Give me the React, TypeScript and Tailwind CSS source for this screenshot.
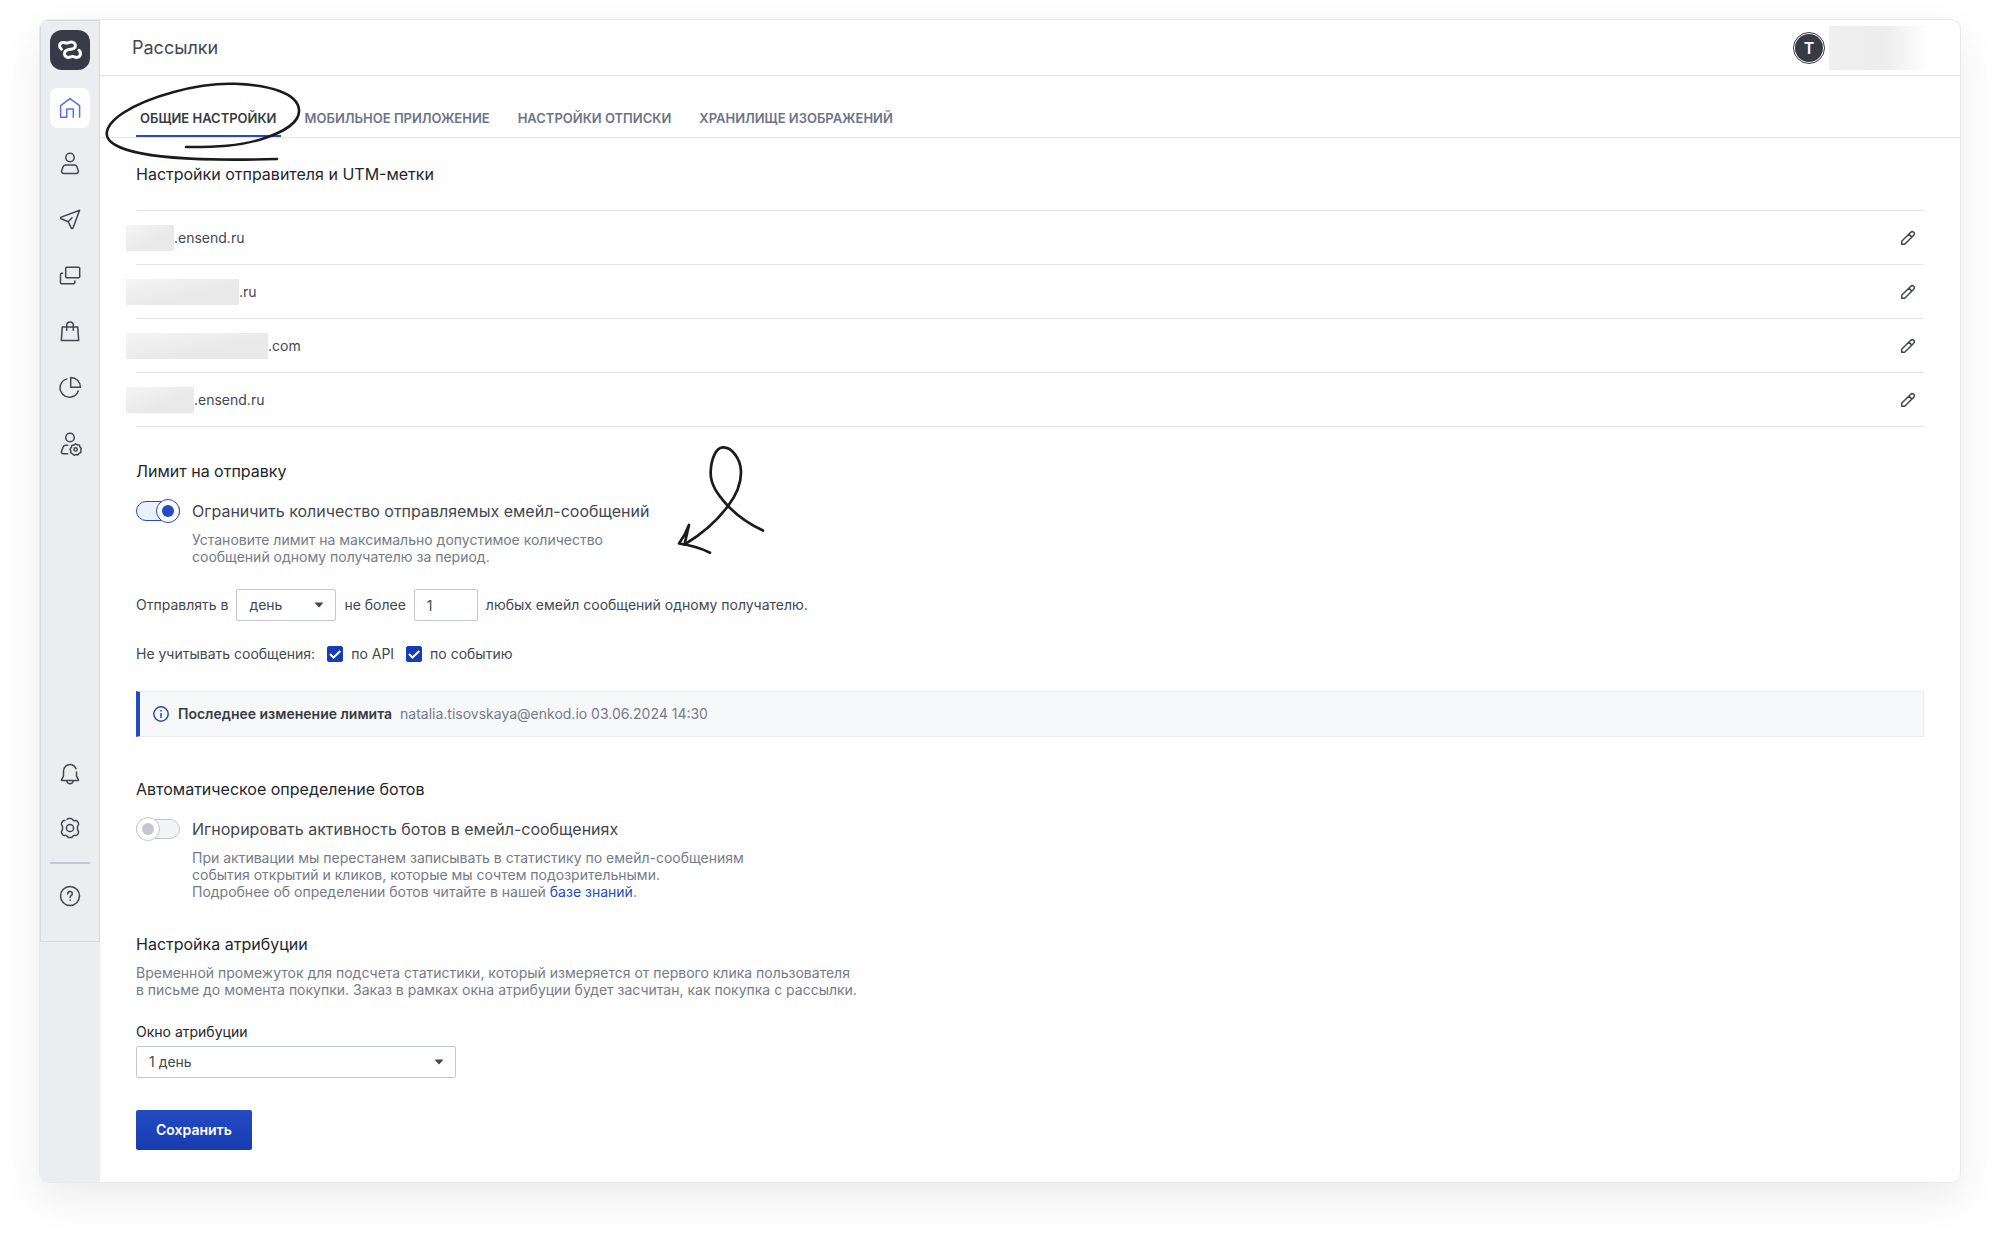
import type React from "react"

const INK = "#43474f"

function NavIcon({ children, stroke = INK }: { children: React.ReactNode; stroke?: string }) {
  return (
    <svg
      width="24"
      height="24"
      viewBox="0 0 24 24"
      fill="none"
      stroke={stroke}
      strokeWidth="1.5"
      strokeLinecap="round"
      strokeLinejoin="round"
      aria-hidden="true"
    >
      {children}
    </svg>
  )
}

const mainNav = [
  {
    label: "Главная",
    active: true,
    icon: (
      <NavIcon stroke="#4f74e6">
        <path d="M8.700 21.300H2.600V9.600L12 2.600l9.600 7v11.700M8.700 21.300v-8.400h6.600v8.400" />
      </NavIcon>
    ),
  },
  {
    label: "Контакты",
    icon: (
      <NavIcon>
        <circle cx="12" cy="5.500" r="4.200" />
        <path d="M7.400 13h9.200c1 0 1.800.6 2.200 1.500l1.500 4c.5 1.500-.4 2.900-2 2.900H5.700c-1.600 0-2.500-1.400-2-2.900l1.500-4c.4-.9 1.200-1.500 2.200-1.500z" />
      </NavIcon>
    ),
  },
  {
    label: "Рассылки",
    icon: (
      <NavIcon>
        <path d="M21.600 2.300 15 20c-.3.800-1.300.8-1.700.1l-3.100-6.400-7-2.900c-.8-.4-.8-1.400.1-1.700l18.300-6.800zM10.200 13.700l3.800-3.900" />
      </NavIcon>
    ),
  },
  {
    label: "Шаблоны",
    icon: (
      <NavIcon>
        <rect x="7.700" y="3.300" width="14" height="10.500" rx="1" />
        <path d="M4.600 9.300H3.500c-.6 0-1 .4-1 1V18.700c0 .6.4 1 1 1h12.300c.6 0 1-.4 1-1v-1.800" />
      </NavIcon>
    ),
  },
  {
    label: "Товары",
    icon: (
      <NavIcon>
        <path d="M4.300 6.900h15.400l1 13.600H3.300l1-13.600zM8.700 10.200V5.400a3.300 3.300 0 0 1 6.600 0v4.800" />
      </NavIcon>
    ),
  },
  {
    label: "Аналитика",
    icon: (
      <NavIcon>
        <path d="M9 2.900a9.300 9.300 0 1 0 11.200 12M12.700 1.500v9.700h9.700a9.700 9.700 0 0 0-9.700-9.700z" />
      </NavIcon>
    ),
  },
  {
    label: "Пользователи",
    icon: (
      <NavIcon>
        <circle cx="12" cy="5.500" r="4.300" />
        <path d="M9.600 21.800H5.300c-1.500 0-2.200-1.200-1.700-2.600l1.500-4c.5-1.200 1.300-1.900 2.600-1.900h2" />
        <path d="m17.600 11.800 1.700 1.100 2 .1.700 1.900 1.400 1.500-.6 1.900.2 2-1.800 1-1.200 1.600-2-.3-2 .6-1.400-1.400-1.800-.9v-2l-.8-1.900 1.300-1.500.5-2 2-.4z" />
        <circle cx="17.600" cy="17.400" r="1.700" />
      </NavIcon>
    ),
  },
]

const tabs = ["Общие настройки", "Мобильное приложение", "Настройки отписки", "Хранилище изображений"]

const domains = [
  { suffix: ".ensend.ru", mask: "w-12" },
  { suffix: ".ru", mask: "w-[113px]" },
  { suffix: ".com", mask: "w-[142px]" },
  { suffix: ".ensend.ru", mask: "w-[68px]" },
]

function Logo() {
  return (
    <svg
      width="40"
      height="40"
      viewBox="0 0 40 40"
      fill="none"
      stroke="#fff"
      strokeWidth="3"
      strokeLinecap="round"
      aria-hidden="true"
    >
      <path d="M11.500 19.200c-2.500-1.700-2.600-4.900-.3-6.300 1.900-1.200 3.500-.2 5 .1 1.800.3 3-.9 5-.9 2.900 0 4.800 2 4.200 4.300-.5 2-2.500 2.600-4.700 2.900-2.500.3-5.400.8-6.100 3.300-.7 2.700 1.300 5 4 4.800 1.600-.1 2.700-1.200 4.300-.9 1.500.3 2.600 1.200 4.500.8 3.400-.7 4.200-4.900 1.500-7" />
    </svg>
  )
}

function Sidebar() {
  return (
    <aside className="w-[60px] shrink-0 bg-[#ecedf1]">
      <nav className="flex flex-col items-center border border-[#d5d9e0] pt-[9px] pb-[25px]">
        <a href="#" aria-label="Enkod" className="mb-[18px] rounded-xl bg-[#383b47]">
          <Logo />
        </a>
        <div className="flex flex-col gap-4">
          {mainNav.map((item) => (
            <a
              key={item.label}
              href="#"
              aria-label={item.label}
              className={`flex size-10 items-center justify-center rounded-lg ${item.active ? "bg-white" : ""}`}
            >
              {item.icon}
            </a>
          ))}
        </div>
        <a href="#" aria-label="Уведомления" className="mt-[290px] flex size-10 items-center justify-center">
          <NavIcon>
            <path d="M18 6.800C16.900 4 14.700 2.500 12 2.500c-3.800 0-6.500 2.900-6.500 6.700v4.600c0 1.200-2 2.700-2 4.700h17c0-2-2-3.500-2-4.700V10M8.700 18.800c.4 1.700 1.600 2.900 3.300 2.900s2.900-1.200 3.300-2.900" />
          </NavIcon>
        </a>
        <a href="#" aria-label="Настройки" className="mt-[14px] flex size-10 items-center justify-center">
          <NavIcon>
            <path d="M9 3.300c.6-.6 1.300-.9 2-.9h2c.9 0 1.300.5 1.700 1.200.5.900 1.400 1.300 2.500 1 .9-.2 1.700-.1 2.200.7l1 1.700c.5.900.3 1.500-.3 2.200-.9 1-.9 4.600 0 5.600.6.700.8 1.300.3 2.200l-1 1.700c-.5.800-1.300.9-2.200.7-1.100-.3-2 .1-2.500 1-.4.700-.8 1.200-1.700 1.200h-2c-.9 0-1.300-.5-1.700-1.200-.5-.9-1.400-1.300-2.500-1-.9.2-1.700.1-2.200-.7l-1-1.700c-.5-.9-.3-1.500.3-2.200.9-1 .9-4.600 0-5.600-.6-.7-.8-1.300-.3-2.200l1-1.700c.5-.8 1.300-.9 2.200-.7" />
            <circle cx="12" cy="12" r="3.600" />
          </NavIcon>
        </a>
        <hr className="mt-[14px] w-10 border-t-2 border-[#c3c8d3]" />
        <a href="#" aria-label="Помощь" className="mt-3 flex size-10 items-center justify-center">
          <NavIcon>
            <circle cx="12" cy="12" r="9.500" />
            <path d="M9.700 9.900c0-1.400 1-2.300 2.300-2.300s2.300.9 2.300 2.100c0 1.700-2.200 1.800-2.200 3.700M12.100 15.900v.3" />
          </NavIcon>
        </a>
      </nav>
    </aside>
  )
}

// Hand-drawn loop around the active tab
function TabScribble() {
  return (
    <svg
      className="pointer-events-none absolute -top-7 -left-8 z-10"
      width="200"
      height="84"
      viewBox="104 80 200 84"
      fill="none"
      stroke="#1b1b1b"
      strokeWidth="2.600"
      strokeLinecap="round"
      aria-hidden="true"
    >
      <path d="M186 147c30 .2 54-1 76-8 22-7 38-17 37-29-1-17-30-25-64-26.200-38-1.300-88 13.200-112 29.200-15 10-21 21-12 29 20 17 90 19 166 17" />
    </svg>
  )
}

function ArrowScribble() {
  return (
    <svg
      className="pointer-events-none absolute -top-5 left-[536px]"
      width="100"
      height="120"
      viewBox="672 439 100 120"
      fill="none"
      stroke="#1b1b1b"
      strokeWidth="2.700"
      strokeLinecap="round"
      strokeLinejoin="round"
      aria-hidden="true"
    >
      <path d="M763 530.500c-13-6-25-14-35-24.500-11-12-18-22-17.300-35 .7-12 5-23 12-23.600 9-.5 17.800 11 18.300 24 .3 12-5 24-13 34.600-11 15-26 28-43.500 38.500" />
      <path d="m689 525-4.500 19.500M689 525c-2.500 7-6 13-10 18.500 11 1.500 21.500 4.500 31 9.200" />
    </svg>
  )
}

function Caret() {
  return (
    <svg
      className="pointer-events-none absolute top-1/2 right-3 -translate-y-1/2"
      width="10"
      height="6"
      viewBox="0 0 10 6"
      fill="#43474f"
      aria-hidden="true"
    >
      <path d="M1.700.5h6.600c.6 0 .8.5.4.900L5.500 4.900c-.3.300-.7.300-1 0L1.300 1.400c-.4-.4-.2-.9.400-.9z" />
    </svg>
  )
}

function Toggle({ id, defaultChecked = false }: { id: string; defaultChecked?: boolean }) {
  return (
    <span className="relative flex h-6 w-11 shrink-0 items-center">
      <input
        id={id}
        type="checkbox"
        role="switch"
        defaultChecked={defaultChecked}
        className="peer h-5 w-11 cursor-pointer appearance-none rounded-full border border-[#c3c7d1] bg-[#f3f4f6] checked:border-[#234bc3] checked:bg-[#eaf1fc]"
      />
      <span className="pointer-events-none absolute left-0 flex size-6 items-center justify-center rounded-full border border-[#c3c7d1] bg-white text-[#c3c7d1] peer-checked:right-0 peer-checked:left-auto peer-checked:border-[#234bc3] peer-checked:text-[#234bc3]">
        <span className="size-3 rounded-full bg-current" />
      </span>
    </span>
  )
}

function Check({ label }: { label: string }) {
  return (
    <label className="flex items-center gap-2">
      <span className="relative flex size-4">
        <input
          type="checkbox"
          defaultChecked
          className="peer size-4 appearance-none rounded-xs border border-[#c3c7d1] checked:border-[#173cb5] checked:bg-[#173cb5]"
        />
        <svg
          className="pointer-events-none absolute inset-0 hidden peer-checked:block"
          width="16"
          height="16"
          viewBox="0 0 16 16"
          fill="none"
          stroke="#fff"
          strokeWidth="2"
          aria-hidden="true"
        >
          <path d="m3 8 3.500 3.500L13.300 5" />
        </svg>
      </span>
      {label}
    </label>
  )
}

function SectionTitle({ children }: { children: React.ReactNode }) {
  return <h2 className="text-base leading-6 text-[#23262c]">{children}</h2>
}

export default function App() {
  return (
    <div className="min-h-screen bg-white px-[39px] pt-[19px] pb-[59px] font-['Inter',sans-serif] text-sm text-[#43474f]">
      <div className="flex overflow-hidden rounded-[10px] border border-[#e8e9ec] bg-white shadow-[0_16px_40px_rgba(0,0,0,0.08)]">
        <Sidebar />

        <div className="min-w-0 flex-1">
          <header className="flex h-14 items-center justify-between border-b border-[#e4e5ea] pr-[30px] pl-8">
            <h1 className="text-lg text-[#43474f]">Рассылки</h1>
            <div className="flex items-center gap-1">
              <button
                type="button"
                className="flex size-8 items-center justify-center rounded-full border border-[#383b44] bg-white p-px"
              >
                <span className="flex size-full items-center justify-center rounded-full bg-[#383b44] text-base font-semibold text-white">
                  T
                </span>
              </button>
              <span className="h-11 w-[101px] bg-linear-to-r from-[#efefef] via-[#ededee] via-55% to-white" />
            </div>
          </header>

          <nav className="flex gap-5 border-b border-[#e4e5ea] px-9 pt-8">
            {tabs.map((tab, i) => (
              <div key={tab} className="relative">
                <a
                  href="#"
                  className={`block border-b-2 px-1 pb-[7px] text-[13px] leading-5 font-semibold uppercase ${
                    i === 0 ? "border-[#234bc3] text-[#383b44]" : "border-transparent text-[#6c7588]"
                  }`}
                >
                  {tab}
                </a>
                {i === 0 && <TabScribble />}
              </div>
            ))}
          </nav>

          <main className="px-9 pt-6 pb-8">
            <section>
              <SectionTitle>Настройки отправителя и UTM-метки</SectionTitle>
              <ul className="mt-6 border-b border-[#e4e5ea]">
                {domains.map((domain, i) => (
                  <li key={i} className="flex h-[54px] items-center justify-between border-t border-[#e4e5ea] pr-2">
                    <span className="-ml-[10px] flex items-center">
                      <span className={`h-[26px] bg-linear-to-br from-[#f5f5f5] to-[#e9e9e9] to-60% ${domain.mask}`} />
                      {domain.suffix}
                    </span>
                    <button type="button" aria-label={`Изменить ${domain.suffix}`}>
                      <svg
                        width="16"
                        height="16"
                        viewBox="0 0 16 16"
                        fill="none"
                        stroke={INK}
                        strokeWidth="1.500"
                        strokeLinejoin="round"
                        aria-hidden="true"
                      >
                        <path d="M1.700 14.300v-3L10.500 2.500c1.100-1.100 2.200-1.100 3.200-.2 1 1 .9 2.100-.2 3.200L4.700 14.300h-3zM8.900 4.100l3 3" />
                      </svg>
                    </button>
                  </li>
                ))}
              </ul>
            </section>

            <section className="relative mt-8">
              <SectionTitle>Лимит на отправку</SectionTitle>
              <ArrowScribble />
              <div className="mt-4 flex gap-3">
                <Toggle id="limit" defaultChecked />
                <div>
                  <label htmlFor="limit" className="block text-base leading-6">
                    Ограничить количество отправляемых емейл-сообщений
                  </label>
                  <p className="mt-2 leading-[17px] text-[#747b88]">
                    Установите лимит на максимально допустимое количество
                    <br />
                    сообщений одному получателю за период.
                  </p>
                </div>
              </div>

              <div className="mt-6 flex items-center gap-2">
                <label htmlFor="period">Отправлять в</label>
                <span className="relative">
                  <select
                    id="period"
                    className="block h-8 w-[100px] appearance-none rounded-xs border border-[#c3c7d1] bg-white pl-3"
                  >
                    <option>день</option>
                    <option>неделю</option>
                    <option>месяц</option>
                  </select>
                  <Caret />
                </span>
                <label htmlFor="count">не более</label>
                <input
                  id="count"
                  type="text"
                  defaultValue="1"
                  className="h-8 w-16 rounded-xs border border-[#c3c7d1] bg-white px-3"
                />
                <span>любых емейл сообщений одному получателю.</span>
              </div>

              <div className="mt-[21px] flex items-center gap-3 leading-6">
                <span>Не учитывать сообщения:</span>
                <Check label="по API" />
                <Check label="по событию" />
              </div>

              <div className="mt-[25px] flex h-[46px] items-center gap-2 border border-l-4 border-[#eaebee] border-l-[#234bc3] bg-[#f7f8fa] px-3">
                <svg width="18" height="18" viewBox="0 0 18 18" fill="none" stroke="#234bc3" strokeWidth="1.500" aria-hidden="true">
                  <circle cx="9" cy="9" r="7.200" />
                  <path d="M9 8v5M9 4.900v1.600" />
                </svg>
                <strong className="font-semibold text-[#383b44]">Последнее изменение лимита</strong>
                <span className="text-[#747b88]">natalia.tisovskaya@enkod.io 03.06.2024 14:30</span>
              </div>
            </section>

            <section className="mt-10">
              <SectionTitle>Автоматическое определение ботов</SectionTitle>
              <div className="mt-4 flex gap-3">
                <Toggle id="bots" />
                <div>
                  <label htmlFor="bots" className="block text-base leading-6">
                    Игнорировать активность ботов в емейл-сообщениях
                  </label>
                  <p className="mt-2 leading-[17px] text-[#747b88]">
                    При активации мы перестанем записывать в статистику по емейл-сообщениям
                    <br />
                    события открытий и кликов, которые мы сочтем подозрительными.
                    <br />
                    Подробнее об определении ботов читайте в нашей{" "}
                    <a href="#" className="text-[#234bc3]">
                      базе знаний
                    </a>
                    .
                  </p>
                </div>
              </div>
            </section>

            <section className="mt-8">
              <SectionTitle>Настройка атрибуции</SectionTitle>
              <p className="mt-2 leading-[17px] text-[#747b88]">
                Временной промежуток для подсчета статистики, который измеряется от первого клика пользователя
                <br />
                в письме до момента покупки. Заказ в рамках окна атрибуции будет засчитан, как покупка с рассылки.
              </p>
              <label htmlFor="window" className="mt-6 block leading-5 text-[#23262c]">
                Окно атрибуции
              </label>
              <div className="relative mt-1 w-80">
                <select
                  id="window"
                  className="block h-8 w-full appearance-none rounded-xs border border-[#c3c7d1] bg-white pl-3"
                >
                  <option>1 день</option>
                  <option>7 дней</option>
                  <option>30 дней</option>
                </select>
                <Caret />
              </div>
            </section>

            <button
              type="submit"
              className="mt-8 h-10 rounded-xs bg-linear-to-b from-[#234bc3] to-[#173cb0] px-5 font-semibold text-white"
            >
              Сохранить
            </button>
          </main>
        </div>
      </div>
    </div>
  )
}
